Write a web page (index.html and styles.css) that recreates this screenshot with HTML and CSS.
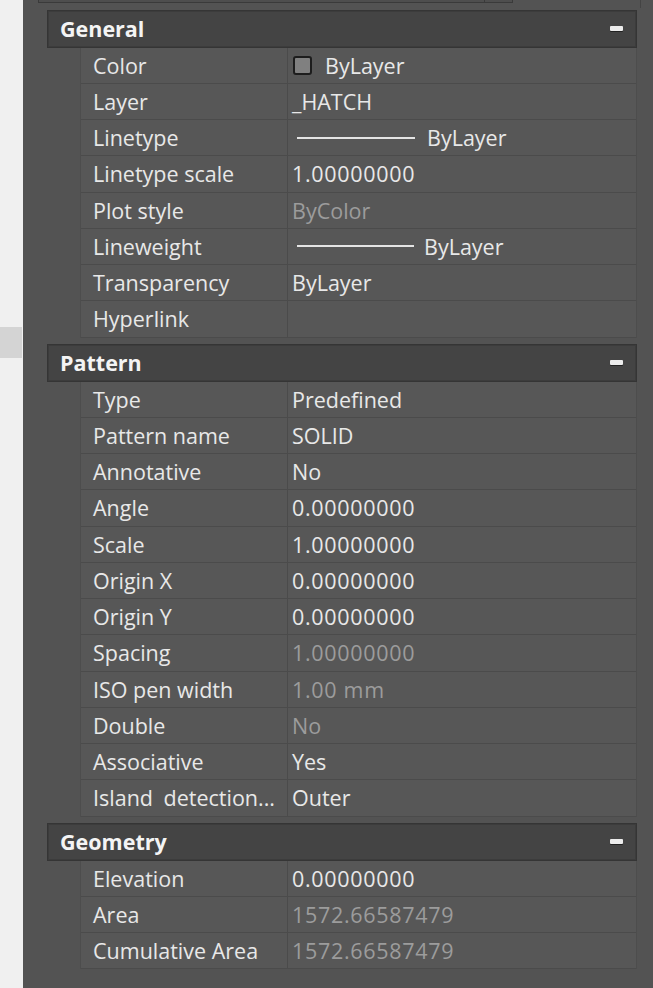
FILE: index.html
```html
<!DOCTYPE html>
<html lang="en">
<head>
<meta charset="utf-8">
<title>Properties</title>
<link rel="stylesheet" href="styles.css">
</head>
<body>
<div class="app">
  <div class="side"><div class="side-tab"></div></div>
  <div class="panel">
    <div class="top-row">
      <div class="combo"><div class="combo-btn"></div></div>
      <div class="tick"></div>
    </div>

    <section class="group">
      <div class="group-head"><span class="group-title">General</span><span class="collapse"></span></div>
      <div class="rows">
        <div class="row"><div class="label">Color</div><div class="value"><span class="swatch"></span>ByLayer</div></div>
        <div class="row"><div class="label">Layer</div><div class="value">_HATCH</div></div>
        <div class="row"><div class="label">Linetype</div><div class="value"><span class="ltline"></span>ByLayer</div></div>
        <div class="row"><div class="label">Linetype scale</div><div class="value num">1.00000000</div></div>
        <div class="row"><div class="label">Plot style</div><div class="value dim">ByColor</div></div>
        <div class="row"><div class="label">Lineweight</div><div class="value"><span class="ltline short"></span>ByLayer</div></div>
        <div class="row"><div class="label">Transparency</div><div class="value">ByLayer</div></div>
        <div class="row"><div class="label">Hyperlink</div><div class="value"></div></div>
      </div>
    </section>

    <section class="group">
      <div class="group-head"><span class="group-title">Pattern</span><span class="collapse"></span></div>
      <div class="rows">
        <div class="row"><div class="label">Type</div><div class="value">Predefined</div></div>
        <div class="row"><div class="label">Pattern name</div><div class="value">SOLID</div></div>
        <div class="row"><div class="label">Annotative</div><div class="value">No</div></div>
        <div class="row"><div class="label">Angle</div><div class="value num">0.00000000</div></div>
        <div class="row"><div class="label">Scale</div><div class="value num">1.00000000</div></div>
        <div class="row"><div class="label">Origin X</div><div class="value num">0.00000000</div></div>
        <div class="row"><div class="label">Origin Y</div><div class="value num">0.00000000</div></div>
        <div class="row"><div class="label">Spacing</div><div class="value num dim">1.00000000</div></div>
        <div class="row"><div class="label">ISO pen width</div><div class="value num dim">1.00 mm</div></div>
        <div class="row"><div class="label">Double</div><div class="value dim">No</div></div>
        <div class="row"><div class="label">Associative</div><div class="value">Yes</div></div>
        <div class="row"><div class="label wide">Island detection...</div><div class="value">Outer</div></div>
      </div>
    </section>

    <section class="group">
      <div class="group-head"><span class="group-title">Geometry</span><span class="collapse"></span></div>
      <div class="rows">
        <div class="row"><div class="label">Elevation</div><div class="value num">0.00000000</div></div>
        <div class="row"><div class="label">Area</div><div class="value num dim">1572.66587479</div></div>
        <div class="row"><div class="label">Cumulative Area</div><div class="value num dim">1572.66587479</div></div>
      </div>
    </section>
  </div>
</div>
</body>
</html>
```

FILE: styles.css
```css
html, body {
  margin: 0;
  padding: 0;
  background: #535353;
}

body {
  font-family: "Open Sans", "Noto Sans", sans-serif;
  font-size: 21.5px;
}

.app {
  display: flex;
  height: 988px;
  overflow: hidden;
}

.side {
  flex: none;
  width: 23px;
  background: #f0f0f0;
}

.side-tab {
  margin-top: 327px;
  width: 22px;
  height: 31px;
  background: #d4d4d4;
}

.panel {
  flex: 1;
  background: #535353;
}

.top-row {
  display: flex;
  align-items: flex-start;
  height: 10px;
}

.combo {
  margin-left: 15px;
  width: 473px;
  height: 2px;
  border: 1px solid #3a3a3a;
  border-top: none;
  background: #4e4e4e;
  display: flex;
  justify-content: flex-end;
}

.combo-btn {
  width: 27px;
  height: 100%;
  border-left: 1px solid #3a3a3a;
}

.tick {
  margin-left: auto;
  margin-right: 12px;
  width: 1px;
  height: 8px;
  background: #444444;
}

.group {
  margin: 0 16px 0 24px;
}

.group + .group {
  margin-top: 6.5px;
}

.group-head {
  box-sizing: border-box;
  height: 37.5px;
  border: 1px solid #353535;
  background: #444444;
  display: flex;
  align-items: center;
  justify-content: space-between;
  padding: 0 13px 0 12px;
  box-shadow: inset 0 0 0 1px #3c3c3c;
}

.group-title {
  color: #f4f4f4;
  font-weight: 700;
  line-height: 35px;
}

.collapse {
  width: 13px;
  height: 5px;
  border-radius: 1px;
  background: #ececec;
  box-shadow: 0 1px 0 #222222;
}

.rows {
  margin-left: 33px;
  border-left: 1px solid #4d4d4d;
  border-right: 1px solid #4d4d4d;
  background: #575757;
}

.row {
  box-sizing: border-box;
  display: grid;
  grid-template-columns: 207px 1fr;
  height: 36.25px;
  border-bottom: 1px solid #4b4b4b;
}

.label {
  box-sizing: border-box;
  padding-left: 12px;
  border-right: 1px solid #4b4b4b;
  color: #e8e8e8;
  line-height: 35px;
  white-space: nowrap;
  overflow: hidden;
}

.label.wide {
  word-spacing: 5px;
}

.value {
  display: flex;
  align-items: center;
  padding-left: 4px;
  color: #e8e8e8;
  line-height: 35px;
  white-space: nowrap;
}

.value.num {
  letter-spacing: 0.7px;
}

.value.dim {
  color: #9c9c9c;
}

.swatch {
  box-sizing: border-box;
  width: 19px;
  height: 19px;
  margin-left: 1px;
  margin-right: 13px;
  border: 2px solid #1d1d1d;
  border-radius: 3px;
  background: #808080;
}

.ltline {
  width: 118px;
  height: 2px;
  margin-left: 5px;
  margin-right: 12px;
  background: #e4e4e4;
}

.ltline.short {
  width: 117px;
  margin-right: 10px;
}
```
